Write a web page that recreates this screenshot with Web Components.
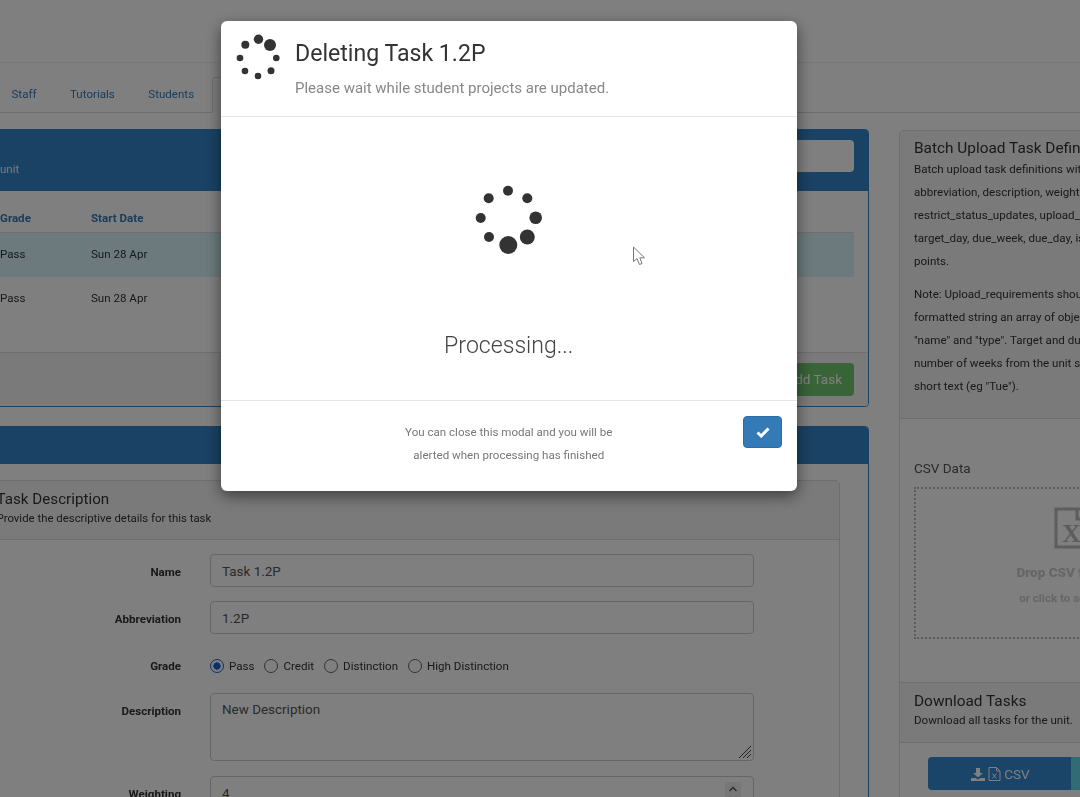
<!DOCTYPE html>
<html>
<head>
<meta charset="utf-8">
<title>Deleting Task</title>
<style>
  html, body { margin: 0; height: 797px; overflow: hidden; background: #fff; }
  body { font-family: 'Roboto', 'Liberation Sans', sans-serif; }
</style>
</head>
<body>
<unit-page></unit-page>
<progress-modal heading="Deleting Task 1.2P" sub="Please wait while student projects are updated."></progress-modal>

<script>
const DOTS_SMALL = [[38,11,6],[26.5,5.3,4.7],[13.3,10.7,4],[8,24,3.3],[13,37,3.3],[26,42,3.3],[39,36.7,3.5],[44.3,24,3.3]];
const DOTS_BIG = [[48,10.7,5],[67.3,18.3,5],[75.7,37.7,6.3],[67.3,57,7.5],[48.3,65,9],[29,57,5],[20.7,38,5],[28.7,18.3,5]];

class DotSpinner extends HTMLElement {
    constructor () {
        super();
        this.attachShadow({ mode: 'open' });
        const big = this.hasAttribute('big');
        const dots = big ? DOTS_BIG : DOTS_SMALL;
        const size = big ? 90 : 52;
        const circles = dots.map(d => `<circle cx="${d[0]}" cy="${d[1]}" r="${d[2]}"/>`).join('');
        this.shadowRoot.innerHTML = `
          <style>
            :host { display: block; width: ${size}px; height: ${size}px; }
            svg { display: block; fill: #333; }
          </style>
          <svg width="${size}" height="${size}" viewBox="0 0 ${size} ${size}">${circles}</svg>`;
    }
}
customElements.define('dot-spinner', DotSpinner);

const tabsTemplate = document.createElement('template');
tabsTemplate.innerHTML = `
  <style>
    :host { display: flex; height: 49px; border-bottom: 1px solid #ddd; padding-left: 11.500px; align-items: flex-end; }
    a { font-size: 11.57px; color: #337ab7; margin-right: 33.500px; height: 35px; line-height: 35px; }
    .active { width: 300px; height: 36px; margin: 0 0 -1px -16px; box-sizing: border-box; border: 1px solid #ddd; border-bottom: 0; border-radius: 4px 4px 0 0; background: #fff; }
  </style>
  <a>Staff</a><a>Tutorials</a><a>Students</a><div class="active"></div>
`;
class NavTabs extends HTMLElement {
    constructor () {
        super();
        this.attachShadow({ mode: 'open' });
        this.shadowRoot.appendChild(tabsTemplate.content.cloneNode(true));
    }
}
customElements.define('nav-tabs', NavTabs);

const tableTemplate = document.createElement('template');
tableTemplate.innerHTML = `
  <style>
    :host { display: block; margin: 0 14px 0 0; height: 161px; font-size: 11.57px; color: #333; }
    .row { display: grid; grid-template-columns: 91px 1fr; align-items: center; padding-left: 46px; }
    .head { color: #337ab7; font-weight: 700; border-bottom: 1px solid #ddd; padding-top: 6.500px; padding-bottom: 7.500px; height: 27px; align-items: end; }
    .body { height: 44px; box-sizing: border-box; padding-bottom: 2px; }
    .sel { background: #d9f4fb; }
  </style>
  <div class="row head"><span>Grade</span><span>Start Date</span></div>
  <div class="row body sel"><span>Pass</span><span>Sun 28 Apr</span></div>
  <div class="row body"><span>Pass</span><span>Sun 28 Apr</span></div>
`;
class TaskTable extends HTMLElement {
    constructor () {
        super();
        this.attachShadow({ mode: 'open' });
        this.shadowRoot.appendChild(tableTemplate.content.cloneNode(true));
    }
}
customElements.define('task-table', TaskTable);

const panelTemplate = document.createElement('template');
panelTemplate.innerHTML = `
  <style>
    :host { display: block; border: 1px solid #3585c8; border-radius: 4px; background: #fff; margin-left: -47px; width: 916px; box-sizing: border-box; }
    .head { background: #3585c8; color: #fff; border-radius: 3px 3px 0 0; padding-left: 46px; }
  </style>
  <div class="head"><slot name="head"></slot></div>
  <slot></slot>
`;
class BluePanel extends HTMLElement {
    constructor () {
        super();
        this.attachShadow({ mode: 'open' });
        this.shadowRoot.appendChild(panelTemplate.content.cloneNode(true));
    }
}
customElements.define('blue-panel', BluePanel);

const rowTemplate = document.createElement('template');
rowTemplate.innerHTML = `
  <style>
    :host { display: grid; grid-template-columns: 199px 543.500px; column-gap: 29px; margin-bottom: 14px; font-size: 11.57px; color: #333; }
    :host([tight]) { margin-bottom: 12px; }
    :host([wide]) { margin-bottom: 15px; }
    label { font-weight: 700; text-align: right; padding-top: 10px; line-height: 16px; }
    .field { display: block; min-height: 33px; }
  </style>
  <label></label>
  <div class="field"><slot></slot></div>
`;
class FormRow extends HTMLElement {
    constructor () {
        super();
        this.attachShadow({ mode: 'open' });
        this.shadowRoot.appendChild(rowTemplate.content.cloneNode(true));
        this.shadowRoot.querySelector('label').innerText = this.getAttribute('label');
    }
}
customElements.define('form-row', FormRow);

const boxTemplate = document.createElement('template');
boxTemplate.innerHTML = `
  <style>
    :host { display: block; position: relative; box-sizing: border-box; height: 33px; border: 1px solid #ccc; border-radius: 4px; padding: 6.500px 11px; font-size: 13.450px; line-height: 20px; color: #555; background: #fff; }
    :host([tall]) { height: 68px; padding-top: 6px; }
    .grip { position: absolute; right: 1px; bottom: 1px; }
    .spin { position: absolute; right: 12px; top: 5px; width: 16px; height: 24px; background: #eee; }
    .spin svg { display: block; margin: 3px auto 0; }
  </style>
  <slot></slot>
`;
class FieldBox extends HTMLElement {
    constructor () {
        super();
        this.attachShadow({ mode: 'open' });
        this.shadowRoot.appendChild(boxTemplate.content.cloneNode(true));
        if (this.hasAttribute('tall')) {
            this.shadowRoot.innerHTML += `<svg class="grip" width="14" height="14" viewBox="0 0 14 14" fill="none" stroke="#444"><path d="M1 13 13 1M5 13 13 5M9 13 13 9"/></svg>`;
        }
        if (this.hasAttribute('number')) {
            this.shadowRoot.innerHTML += `<div class="spin"><svg width="10" height="18" viewBox="0 0 10 18" fill="none" stroke="#555" stroke-width="1.4"><path d="M1.5 6 5 2.5 8.500 6M1.500 12 5 15.500 8.500 12"/></svg></div>`;
        }
    }
}
customElements.define('field-box', FieldBox);

const radioTemplate = document.createElement('template');
radioTemplate.innerHTML = `
  <style>
    :host { display: inline-flex; align-items: center; font-size: 11.57px; color: #333; margin-right: 10px; height: 30px; }
    i { box-sizing: border-box; width: 14px; height: 14px; border-radius: 50%; border: 1.5px solid #666; margin-right: 5px; display: block; background: #fff; }
    :host([checked]) i { border-color: #1a5fd0; background: radial-gradient(circle, #1a5fd0 0 3.400px, #fff 3.900px); }
  </style>
  <i></i><slot></slot>
`;
class GradeRadio extends HTMLElement {
    constructor () {
        super();
        this.attachShadow({ mode: 'open' });
        this.shadowRoot.appendChild(radioTemplate.content.cloneNode(true));
    }
}
customElements.define('grade-radio', GradeRadio);

const descTemplate = document.createElement('template');
descTemplate.innerHTML = `
  <style>
    :host { display: block; margin: 16px 0 0 27px; width: 859px; box-sizing: border-box; border: 1px solid #ddd; border-radius: 4px; }
    .head { height: 59px; box-sizing: border-box; background: #f5f5f5; border-bottom: 1px solid #ddd; padding: 8px 0 0 14.500px; color: #333; }
    h3 { margin: 0; font-size: 15.200px; font-weight: 400; line-height: 20px; }
    p { margin: 0; font-size: 11.400px; line-height: 18px; }
    .body { padding: 14px 0 0 0; }
  </style>
  <div class="head"><h3>Task Description</h3><p>Provide the descriptive details for this task</p></div>
  <div class="body"><slot></slot></div>
`;
class TaskDescription extends HTMLElement {
    constructor () {
        super();
        this.attachShadow({ mode: 'open' });
        this.shadowRoot.appendChild(descTemplate.content.cloneNode(true));
    }
}
customElements.define('task-description', TaskDescription);

const sideTemplate = document.createElement('template');
sideTemplate.innerHTML = `
  <style>
    :host { display: block; width: 360px; margin-top: 1px; box-sizing: border-box; border: 1px solid #ddd; border-radius: 4px 0 0 4px; background: #fff; color: #333; white-space: nowrap; font-size: 11.57px; }
    .batch { background: #f5f5f5; border-bottom: 1px solid #ddd; height: 288px; box-sizing: border-box; padding: 7px 14px 0; }
    h3 { margin: 0; font-size: 15.400px; font-weight: 400; line-height: 20px; }
    .batch p { margin: 0 0 10px; line-height: 23px; }
    .csv { height: 263px; box-sizing: border-box; padding: 40px 14px 0; }
    .csv span { display: block; font-size: 13.500px; color: #555; line-height: 18px; margin-bottom: 10px; }
    .drop { box-sizing: border-box; width: 324px; height: 152px; border: 2px dotted #bbb; display: flex; flex-direction: column; align-items: center; color: #ccc; font-weight: 700; padding-top: 18px; }
    .drop svg { display: block; margin-bottom: 14px; }
    .drop b { font-size: 13.500px; line-height: 18px; margin-bottom: 9px; }
    .drop em { font-style: normal; font-size: 11.57px; line-height: 16px; }
    .download { background: #f5f5f5; height: 61px; box-sizing: border-box; border-top: 1px solid #ddd; border-bottom: 1px solid #ddd; padding: 8px 14px 0; }
    .download p { margin: 0; line-height: 18px; }
    .buttons { display: flex; padding: 14px 0 0 28px; }
    button { border: 0; height: 33px; width: 143px; background: #3589d0; border-radius: 4px 0 0 4px; color: #fff; font: 400 13.500px 'Roboto', sans-serif; display: flex; align-items: center; justify-content: center; gap: 3px; padding: 0 0 0 2px; }
    button + button { background: #66d6e8; border-radius: 0; }
  </style>
  <div class="batch">
    <h3>Batch Upload Task Definitions</h3>
    <p>Batch upload task definitions with<br>abbreviation, description, weighting,<br>restrict_status_updates, upload_requirements,<br>target_day, due_week, due_day, is_graded,<br>points.</p>
    <p>Note: Upload_requirements should be<br>formatted string an array of objects<br>"name" and "type". Target and due<br>number of weeks from the unit start<br>short text (eg "Tue").</p>
  </div>
  <div class="csv">
    <span>CSV Data</span>
    <div class="drop">
      <svg width="44" height="42" viewBox="0 0 44 42" fill="none" stroke="#bbb" stroke-width="3"><path d="M2 2H30L42 14V40H2ZM23 2V12H42"/><text x="8" y="35" font-family="Liberation Serif, serif" font-size="26" font-weight="700" fill="#bbb" stroke="none">X</text></svg>
      <b>Drop CSV files here</b>
      <em>or click to select a file</em>
    </div>
  </div>
  <div class="download"><h3>Download Tasks</h3><p>Download all tasks for the unit.</p></div>
  <div class="buttons">
    <button>
      <svg width="14" height="14" viewBox="0 0 14 14" fill="#fff"><path d="M5 1H9V6H12L7 10.500 2 6H5ZM0 11H4.500L7 12.500 9.500 11H14V14H0Z"/></svg>
      <svg width="13" height="14" viewBox="0 0 13 14" fill="none" stroke="#fff"><path d="M1 .5H8.500L12 4V13.500H1ZM8.500 .5V4H12M4.500 6.500 8.500 11.500M8.500 6.500 4.500 11.500"/></svg>
      CSV
    </button>
    <button></button>
  </div>
`;
class SidePanel extends HTMLElement {
    constructor () {
        super();
        this.attachShadow({ mode: 'open' });
        this.shadowRoot.appendChild(sideTemplate.content.cloneNode(true));
    }
}
customElements.define('side-panel', SidePanel);

const pageTemplate = document.createElement('template');
pageTemplate.innerHTML = `
  <style>
    :host { display: block; height: 797px; overflow: hidden; filter: blur(.4px); }
    .top { height: 62px; background: #fff; border-bottom: 1px solid #eee; }
    .cols { display: grid; grid-template-columns: 869px 360px; column-gap: 30px; padding-top: 16px; width: 1300px; }
    .left { display: grid; row-gap: 19px; align-content: start; }
    .unit { height: 61px; display: flex; justify-content: space-between; font-size: 11.57px; }
    .unit span { padding-top: 32px; line-height: 14px; color: #eaf2f9; }
    .search { width: 200px; height: 32px; margin: 10px 14px 0 0; background: #fff; border-radius: 4px; }
    .foot { height: 54px; box-sizing: border-box; background: #f5f5f5; border-top: 1px solid #ddd; display: flex; justify-content: flex-end; padding: 10px 14px; border-radius: 0 0 3px 3px; }
    .add { background: #70c870; color: #fff; font-size: 13.500px; border-radius: 4px; height: 33px; line-height: 33px; padding: 0 12px; white-space: nowrap; }
    .band { height: 37px; }
    .radios { display: flex; padding-top: 3px; }
  </style>
  <div class="top"></div>
  <nav-tabs></nav-tabs>
  <div class="cols">
    <div class="left">
      <blue-panel>
        <div slot="head" class="unit"><span>unit</span><div class="search"></div></div>
        <task-table></task-table>
        <div class="foot"><div class="add">Add Task</div></div>
      </blue-panel>
      <blue-panel>
        <div slot="head" class="band"></div>
        <task-description>
          <form-row label="Name"><field-box>Task 1.2P</field-box></form-row>
          <form-row label="Abbreviation"><field-box>1.2P</field-box></form-row>
          <form-row label="Grade" tight>
            <div class="radios">
              <grade-radio checked>Pass</grade-radio>
              <grade-radio>Credit</grade-radio>
              <grade-radio>Distinction</grade-radio>
              <grade-radio>High Distinction</grade-radio>
            </div>
          </form-row>
          <form-row label="Description" wide><field-box tall>New Description</field-box></form-row>
          <form-row label="Weighting"><field-box number>4</field-box></form-row>
        </task-description>
      </blue-panel>
    </div>
    <side-panel></side-panel>
  </div>
`;
class UnitPage extends HTMLElement {
    constructor () {
        super();
        this.attachShadow({ mode: 'open' });
        this.shadowRoot.appendChild(pageTemplate.content.cloneNode(true));
    }
}
customElements.define('unit-page', UnitPage);

const modalTemplate = document.createElement('template');
modalTemplate.innerHTML = `
  <style>
    :host { position: fixed; inset: 0; background: rgba(0,0,0,.5); display: block; }
    .dialog { position: absolute; left: 220.500px; top: 21px; width: 576.500px; height: 470px; box-sizing: border-box; background: #fff; border-radius: 6px; box-shadow: 0 5px 15px rgba(0,0,0,.5); display: flex; flex-direction: column; color: #333; }
    header { height: 96px; box-sizing: border-box; border-bottom: 1px solid #e5e5e5; display: flex; padding: 13px 0 0 11.500px; gap: 11px; }
    h3 { margin: 0; font-size: 23.100px; font-weight: 400; line-height: 34px; margin-top: 2.500px; }
    header p { margin: 0; font-size: 15px; line-height: 20px; color: #888; margin-top: 7.500px; }
    main { flex: 1; position: relative; display: flex; flex-direction: column; align-items: center; padding-top: 63px; box-sizing: border-box; }
    dot-spinner[big] { margin-left: -7px; }
    main div { font-size: 23.100px; font-weight: 300; color: #444; margin-top: 60px; line-height: 32px; }
    .cursor { position: absolute; left: 411.500px; top: 129px; }
    footer { height: 91px; box-sizing: border-box; border-top: 1px solid #e5e5e5; display: flex; padding: 15px 15px 0 0; }
    footer p { flex: 1; margin: 0; text-align: center; font-size: 11.57px; line-height: 23px; color: #777; padding: 4.500px 0 0 54px; box-sizing: border-box; }
    button { width: 39px; height: 32px; background: #337ab7; border: 1px solid #2e6da4; border-radius: 4px; padding: 0; display: flex; align-items: center; justify-content: center; }
  </style>
  <div class="dialog">
    <header>
      <dot-spinner></dot-spinner>
      <div><h3></h3><p></p></div>
    </header>
    <main>
      <dot-spinner big></dot-spinner>
      <div>Processing...</div>
      <svg class="cursor" width="14" height="21" viewBox="0 0 14 21" fill="#fff" stroke="#777"><path d="M1.500 1V15.500L5 12.500 7.500 18.500 10 17.500 7.800 11.800H12.500Z"/></svg>
    </main>
    <footer>
      <p>You can close this modal and you will be<br>alerted when processing has finished</p>
      <button aria-label="Close"><svg width="14" height="11" viewBox="0 0 14 11" fill="none" stroke="#fff" stroke-width="3"><path d="M1.500 5.500 5.200 9 12.500 1.500"/></svg></button>
    </footer>
  </div>
`;
class ProgressModal extends HTMLElement {
    constructor () {
        super();
        this.attachShadow({ mode: 'open' });
        this.shadowRoot.appendChild(modalTemplate.content.cloneNode(true));
        this.shadowRoot.querySelector('h3').innerText = this.getAttribute('heading');
        this.shadowRoot.querySelector('header p').innerText = this.getAttribute('sub');
    }
}
customElements.define('progress-modal', ProgressModal);
</script>
</body>
</html>
